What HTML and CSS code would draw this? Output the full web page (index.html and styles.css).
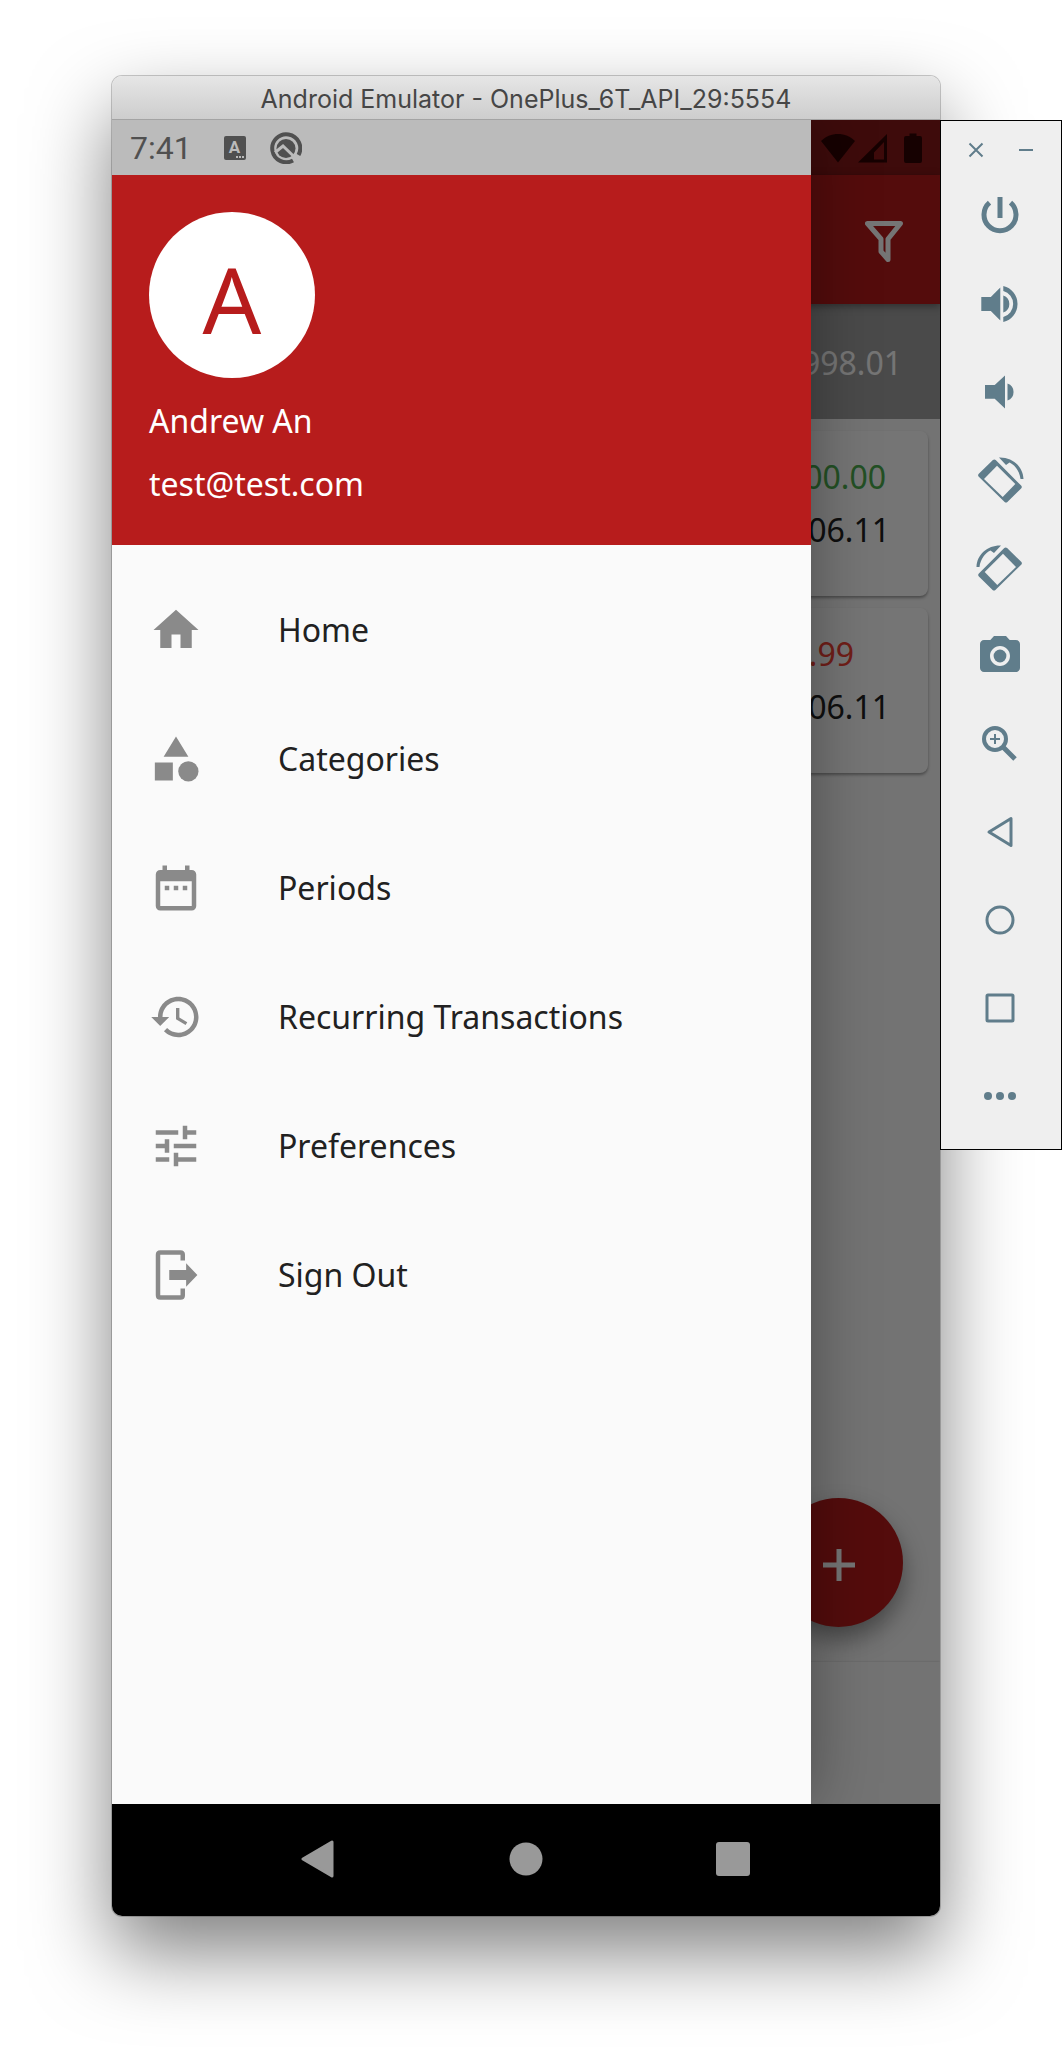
FILE: index.html
```html
<!DOCTYPE html>
<html lang="en">
<head>
<meta charset="utf-8">
<meta name="viewport" content="width=device-width, initial-scale=1">
<title>Android Emulator - OnePlus_6T_API_29:5554</title>
<link rel="stylesheet" href="styles.css">
</head>
<body>
<main class="window">
  <header class="titlebar">Android Emulator - OnePlus_6T_API_29:5554</header>
  <div class="screen">
    <div class="app">
      <div class="app-status">
        <svg width="36" height="30" viewBox="0 0 36 30"><path d="M18 29.500 1 8C10-1.500 26-1.500 35 8z"/></svg>
        <svg width="30" height="30" viewBox="0 0 30 30"><path fill-rule="evenodd" d="M0 29.500 29 1v28.500zM26 9 16 19.500V26.500h10z"/></svg>
        <svg class="battery" width="18" height="30" viewBox="0 0 18 30"><path d="M5.500 3V0.500h7V3H16q2 0 2 2v23q0 2-2 2H2q-2 0-2-2V5q0-2 2-2z"/></svg>
      </div>
      <div class="appbar">
        <button class="icon-button" aria-label="Filter">
          <svg width="38" height="42" viewBox="0 0 38 42"><path d="M2.500 2.500h33L23 18v20.500l-7-8V18z" fill="none" stroke="#fff" stroke-width="5" stroke-linejoin="round"/></svg>
        </button>
      </div>
      <div class="total">998.01</div>
      <div class="cards">
        <article class="card"><p class="amount income">00.00</p><p>06.11</p></article>
        <article class="card"><p class="amount expense">.99</p><p>06.11</p></article>
      </div>
      <div class="fab-row">
        <button class="fab" aria-label="Add">
          <svg width="34" height="34" viewBox="0 0 34 34"><path d="M17 1v32M1 17h32" stroke="#fff" stroke-width="5"/></svg>
        </button>
      </div>
      <div class="bottom-bar"></div>
    </div>
    <div class="scrim"></div>
    <aside class="drawer">
      <div class="drawer-status">
        <span class="clock">7:41</span>
        <svg width="22" height="24" viewBox="0 0 22 24"><rect width="22" height="24" rx="2" fill="#505050"/><text x="10.500" y="17" text-anchor="middle" class="badge-letter">A</text><path d="M12 21h2m1 0h2m1 0h2" stroke="#bbb" stroke-width="2"/></svg>
        <svg width="32" height="32" viewBox="0 0 32 32"><path d="M23 28.500A14 14 0 1 1 28.500 23" fill="none" stroke="#505050" stroke-width="4"/><circle cx="16" cy="16.500" r="9.500" fill="#505050"/><path d="M5 20.500l8-6.500L27 27.500" fill="none" stroke="#bbb" stroke-width="3"/></svg>
      </div>
      <section class="profile">
        <div class="avatar">A</div>
        <p>Andrew An</p>
        <p>test@test.com</p>
      </section>
      <nav class="menu">
        <a href="#home"><svg viewBox="0 0 24 24"><path d="M10 20v-6h4v6h5v-8h3L12 3 2 12h3v8z"/></svg>Home</a>
        <a href="#categories"><svg viewBox="0 0 24 24"><path d="M12 2 6.500 11h11zM2.600 13.500h8v8h-8z"/><circle cx="17.500" cy="17.500" r="4.500"/></svg>Categories</a>
        <a href="#periods"><svg viewBox="0 0 24 24"><path d="M9 11H7v2h2v-2zm4 0h-2v2h2v-2zm4 0h-2v2h2v-2zm2-7h-1V2h-2v2H8V2H6v2H5c-1.110 0-1.990.900-1.990 2L3 20c0 1.100.890 2 2 2h14c1.100 0 2-.900 2-2V6c0-1.100-.900-2-2-2zm0 16H5V9h14v11z"/></svg>Periods</a>
        <a href="#recurring"><svg viewBox="0 0 24 24"><path d="M13 3c-4.970 0-9 4.030-9 9H1l3.890 3.890.070.140L9 12H6c0-3.870 3.130-7 7-7s7 3.130 7 7-3.130 7-7 7c-1.930 0-3.680-.790-4.940-2.060l-1.420 1.420C8.270 19.990 10.510 21 13 21c4.970 0 9-4.030 9-9s-4.030-9-9-9zm-1 5v5l4.280 2.540.720-1.210-3.500-2.080V8H12z"/></svg>Recurring Transactions</a>
        <a href="#preferences"><svg viewBox="0 0 24 24"><path d="M3 17v2h6v-2H3zM3 5v2h10V5H3zm10 16v-2h8v-2h-8v-2h-2v6h2zM7 9v2H3v2h4v2h2V9H7zm14 4v-2H11v2h10zm-6-4h2V7h4V5h-4V3h-2v6z"/></svg>Preferences</a>
        <a href="#sign-out"><svg viewBox="0 0 24 24"><path d="M14 5.500V3H5v18h9v-3h2v3q0 2-2 2H5q-2 0-2-2V3q0-2 2-2h9q2 0 2 2v2.500zM9 9.800h7.500V6.800L21.500 12l-5 5.200v-3H9z"/></svg>Sign Out</a>
      </nav>
    </aside>
  </div>
  <footer class="navbar">
    <button aria-label="Back"><svg width="36" height="38" viewBox="0 0 36 38"><path d="M31 2v34L2 19z" fill="#999" stroke="#999" stroke-width="3" stroke-linejoin="round"/></svg></button>
    <button aria-label="Home"><svg width="36" height="38" viewBox="0 0 36 38"><circle cx="18" cy="19" r="16.500" fill="#999"/></svg></button>
    <button aria-label="Overview"><svg width="36" height="38" viewBox="0 0 36 38"><rect x="1" y="2" width="34" height="34" rx="3" fill="#999"/></svg></button>
  </footer>
</main>
<aside class="toolbar" aria-label="Emulator controls">
  <div class="window-controls">
    <button aria-label="Close"><svg width="16" height="16" viewBox="0 0 16 16"><path d="M1.500 1.500l13 13m0-13l-13 13"/></svg></button>
    <button aria-label="Minimize"><svg width="16" height="16" viewBox="0 0 16 16"><path d="M1 8h14"/></svg></button>
  </div>
  <button aria-label="Power"><svg viewBox="0 0 48 48"><path d="M24 5v21M34.500 10.700a16 16 0 1 1-21 0" fill="none" stroke="#607d8b" stroke-width="5"/></svg></button>
  <button aria-label="Volume up"><svg viewBox="0 0 48 48"><path d="M5.300 17h9.500l9.500-9.500v33l-9.500-9.500H5.300zM27.300 15.500a9 9 0 0 1 0 17zM27.300 6a18.500 18.500 0 0 1 0 36v-5a13.500 13.500 0 0 0 0-26z"/></svg></button>
  <button aria-label="Volume down"><svg viewBox="0 0 48 48"><path d="M9 17h9.700L29 7.500v33l-10.300-9.800H9zM31.500 15.500a9 9 0 0 1 0 17z"/></svg></button>
  <button aria-label="Rotate left"><svg viewBox="0 0 48 48"><path d="M18.300 5.500 4.200 19.300 30 44.500 43.700 31z" stroke="#607d8b" stroke-width="4" stroke-linejoin="round"/><path class="hole" d="M21 9.700 8 23l18.700 18 12.600-13z"/><path d="M23 1.500C36 1 47 10 47.500 23H44.500C43.500 15 39 9 33.500 6.500L30 9z"/></svg></button>
  <button aria-label="Rotate right"><svg viewBox="0 0 48 48"><g transform="translate(48 0) scale(-1 1)"><path d="M18.300 5.500 4.200 19.300 30 44.500 43.700 31z" stroke="#607d8b" stroke-width="4" stroke-linejoin="round"/><path class="hole" d="M21 9.700 8 23l18.700 18 12.600-13z"/><path d="M23 1.500C36 1 47 10 47.500 23H44.500C43.500 15 39 9 33.500 6.500L30 9z"/></g></svg></button>
  <button aria-label="Take screenshot"><svg viewBox="0 0 24 24"><circle cx="12" cy="12" r="3.200"/><path d="M9 2 7.170 4H4c-1.100 0-2 .900-2 2v12c0 1.100.900 2 2 2h16c1.100 0 2-.900 2-2V6c0-1.100-.900-2-2-2h-3.170L15 2H9zm3 15c-2.760 0-5-2.240-5-5s2.240-5 5-5 5 2.240 5 5-2.240 5-5 5z"/></svg></button>
  <button aria-label="Zoom"><svg viewBox="0 0 48 48"><g fill="none" stroke="#607d8b"><circle cx="19" cy="19" r="11" stroke-width="4"/><path d="M19 14v10M14 19h10" stroke-width="2"/><path d="M27.500 27.500 39 39" stroke-width="5"/></g></svg></button>
  <button aria-label="Back"><svg viewBox="0 0 48 48"><path d="M35 10.500v27L13 24z" fill="none" stroke="#607d8b" stroke-width="3" stroke-linejoin="round"/></svg></button>
  <button aria-label="Home"><svg viewBox="0 0 48 48"><circle cx="24" cy="24" r="13" fill="none" stroke="#607d8b" stroke-width="3"/></svg></button>
  <button aria-label="Overview"><svg viewBox="0 0 48 48"><rect x="11" y="11" width="26" height="26" rx="1" fill="none" stroke="#607d8b" stroke-width="3"/></svg></button>
  <button aria-label="More"><svg viewBox="0 0 48 48"><circle cx="12" cy="24" r="4"/><circle cx="24" cy="24" r="4"/><circle cx="36" cy="24" r="4"/></svg></button>
</aside>
</body>
</html>
```
FILE: styles.css
```css
* { box-sizing: border-box; }

body {
  margin: 0;
  min-height: 100vh;
  padding: 76px 0 148px 112px;
  display: flex;
  background: #fff;
  overflow-x: hidden;
  font-family: "Noto Sans", "Open Sans", sans-serif;
  font-size: 32px;
  line-height: 40px;
  color: #212121;
}

p { margin: 0; }

button {
  display: flex;
  align-items: center;
  justify-content: center;
  padding: 0;
  border: 0;
  background: none;
}

.window {
  flex: 1;
  min-width: 0;
  display: flex;
  flex-direction: column;
  border-radius: 10px;
  box-shadow: 0 0 0 1px rgba(0, 0, 0, .2), 0 36px 80px rgba(0, 0, 0, .5);
}

.titlebar {
  height: 44px;
  border-radius: 10px 10px 0 0;
  border-bottom: 1px solid #a3a3a3;
  background: linear-gradient(#e6e6e6, #cdcdcd);
  font: 25px/46px Inter, Roboto, sans-serif;
  color: #464646;
  text-align: center;
  white-space: nowrap;
  overflow: hidden;
}

.screen {
  position: relative;
  flex: 1;
  display: flex;
  overflow: hidden;
}

.app {
  flex: 1;
  display: flex;
  flex-direction: column;
  isolation: isolate;
  background: #fafafa;
}

.app-status {
  height: 55px;
  padding: 0 18px 0 0;
  display: flex;
  align-items: center;
  justify-content: flex-end;
  gap: 2px;
  background: #871818;
  fill: #300404;
}

.battery { margin-left: 14px; }

.appbar {
  height: 129px;
  padding: 4px 37px 0 0;
  display: flex;
  align-items: center;
  justify-content: flex-end;
  background: #b71c1c;
  box-shadow: 0 2px 8px rgba(0, 0, 0, .4);
  z-index: 1;
}

.total {
  padding: 39px 38px 36px;
  background: #a1a1a1;
  color: #fff;
  text-align: right;
}

.cards {
  padding: 12px;
  display: grid;
  gap: 12px;
}

.card {
  height: 165px;
  padding: 26px 38px;
  border-radius: 8px;
  background: #fff;
  box-shadow: 0 2px 3px rgba(0, 0, 0, .35);
  text-align: right;
  display: grid;
  align-content: start;
  gap: 13px;
}

.income { color: #4caf50; padding-right: 4px; }
.expense { color: #f44336; padding-right: 36px; }

.fab-row {
  margin-top: auto;
  padding: 0 37px 35px;
  display: flex;
  justify-content: flex-end;
}

.fab {
  width: 129px;
  height: 129px;
  padding-top: 4px;
  border-radius: 50%;
  background: #b71c1c;
  box-shadow: 0 12px 24px rgba(0, 0, 0, .4);
}

.bottom-bar {
  height: 142px;
  background: #fafafa;
  box-shadow: 0 0 2px rgba(0, 0, 0, .2);
}

.scrim {
  position: absolute;
  inset: 0;
  background: rgba(0, 0, 0, .54);
}

.drawer {
  position: absolute;
  top: 0;
  bottom: 0;
  left: 0;
  width: 84.4%;
  background: #fafafa;
  box-shadow: 0 0 60px rgba(0, 0, 0, .35);
}

.drawer-status {
  height: 55px;
  padding-left: 18px;
  display: flex;
  align-items: center;
  gap: 24px;
  background: #bbb;
  color: #505050;
}

.clock {
  width: 70px;
  font-family: Roboto, sans-serif;
}

.badge-letter {
  font: bold 17px Roboto, sans-serif;
  fill: #bbb;
}

.profile {
  height: 370px;
  padding: 37px;
  background: #b71c1c;
  color: #fff;
  display: grid;
  align-content: start;
  gap: 23px;
}

.avatar {
  width: 166px;
  height: 166px;
  border-radius: 50%;
  background: #fff;
  color: #b71c1c;
  font-size: 92px;
  line-height: 174px;
  text-align: center;
}

.menu {
  padding: 20px 37px;
  display: grid;
}

.menu a {
  height: 129px;
  display: flex;
  align-items: center;
  gap: 75px;
  color: inherit;
  text-decoration: none;
}

.menu svg {
  width: 54px;
  height: 54px;
  fill: #8a8a8a;
}

.navbar {
  height: 112px;
  padding-bottom: 2px;
  display: flex;
  justify-content: center;
  border-radius: 0 0 10px 10px;
  background: #000;
}

.navbar button { width: 25%; }

.toolbar {
  flex: none;
  width: 122px;
  margin-top: 44px;
  align-self: flex-start;
  padding: 8px 0 9px;
  display: flex;
  flex-direction: column;
  align-items: center;
  border: 1px solid #000;
  background: #efefef;
  fill: #607d8b;
  z-index: 1;
}

.toolbar > button {
  width: 88px;
  height: 88px;
  padding-right: 2px;
}

.toolbar > button svg {
  width: 48px;
  height: 48px;
}

.hole { fill: #efefef; }

.window-controls {
  height: 43px;
  padding-bottom: 2px;
  display: flex;
  align-items: center;
  gap: 34px;
  stroke: #607d8b;
  stroke-width: 2;
}
```
